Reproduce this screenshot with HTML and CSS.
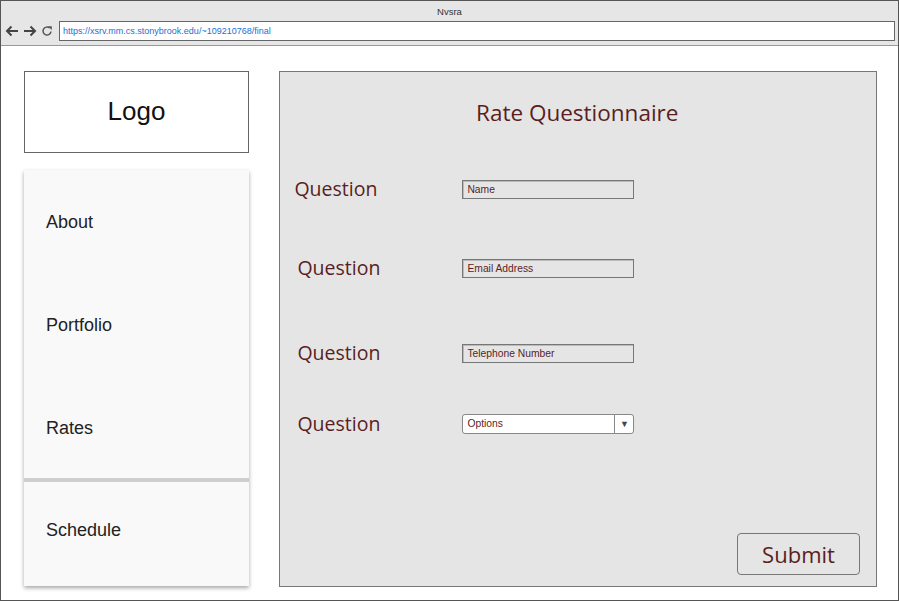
FILE: index.html
```html
<!DOCTYPE html>
<html>
<head>
<meta charset="utf-8">
<title>Nvsra</title>
<link rel="stylesheet" href="styles.css">
</head>
<body>
<div class="frame">
  <div class="chrome">
    <div class="win-title">Nvsra</div>
    <div class="navbar">
      <div class="nav-icons">
        <svg width="14" height="12" viewBox="0 0 14 12"><path d="M13 6H2M6.5 1.5L2 6l4.5 4.5" fill="none" stroke="#444" stroke-width="2"/></svg>
        <svg width="14" height="12" viewBox="0 0 14 12"><path d="M1 6h11M7.5 1.5L12 6l-4.5 4.5" fill="none" stroke="#444" stroke-width="2"/></svg>
        <svg width="12" height="12" viewBox="0 0 12 12"><path d="M10 6.5A4 4 0 1 1 8.6 3" fill="none" stroke="#555" stroke-width="1.5"/><path d="M7 1.2h3.8v3.8z" fill="#555"/></svg>
      </div>
      <div class="url">https://xsrv.mm.cs.stonybrook.edu/~109210768/final</div>
    </div>
  </div>
  <div class="content">
    <div class="side">
      <div class="logo">Logo</div>
      <div class="menu">
        <div class="item">About</div>
        <div class="item">Portfolio</div>
        <div class="item">Rates</div>
        <div class="sep"></div>
        <div class="item last">Schedule</div>
      </div>
    </div>
    <div class="panel">
      <div class="title">Rate Questionnaire</div>
      <div class="row q1">
        <div class="label">Question</div>
        <div class="field">Name</div>
      </div>
      <div class="row q2">
        <div class="label indent">Question</div>
        <div class="field">Email Address</div>
      </div>
      <div class="row q3">
        <div class="label indent">Question</div>
        <div class="field">Telephone Number</div>
      </div>
      <div class="row q4">
        <div class="label indent">Question</div>
        <div class="select"><span class="opt">Options</span><span class="arrow">▼</span></div>
      </div>
      <div class="actions">
        <div class="submit">Submit</div>
      </div>
    </div>
  </div>
</div>
</body>
</html>
```
FILE: styles.css
```css
html, body {
  margin: 0;
  padding: 0;
  background: #fff;
}
.frame {
  width: 899px;
  height: 601px;
  box-sizing: border-box;
  border: 1px solid #555;
  display: flex;
  flex-direction: column;
  font-family: "Liberation Sans", Arial, sans-serif;
}
.chrome {
  flex-shrink: 0;
  height: 45px;
  background: #e6e6e6;
  border-bottom: 1px solid #999;
  box-sizing: border-box;
  display: flex;
  flex-direction: column;
}
.win-title {
  height: 20px;
  line-height: 22px;
  text-align: center;
  font-size: 9.5px;
  color: #333;
}
.navbar {
  display: flex;
  align-items: center;
  height: 20px;
}
.nav-icons {
  width: 58px;
  display: flex;
  align-items: center;
  gap: 4px;
  padding-left: 4px;
  box-sizing: border-box;
}
.url {
  flex: 1;
  margin-right: 3px;
  height: 20px;
  box-sizing: border-box;
  border: 1px solid #666;
  background: #fff;
  font-size: 9px;
  line-height: 18px;
  color: #1a6fd6;
  padding-left: 3px;
}
.content {
  flex: 1;
  min-height: 0;
  display: flex;
  align-items: flex-start;
  padding: 25px 21px 12px 23px;
}
.side {
  width: 226px;
  display: flex;
  flex-direction: column;
}
.logo {
  width: 225px;
  height: 82px;
  box-sizing: border-box;
  border: 1px solid #666;
  display: flex;
  align-items: center;
  justify-content: center;
  padding-bottom: 2px;
  font-size: 26px;
  color: #111;
}
.menu {
  margin-top: 17px;
  width: 225px;
  height: 416px;
  background: #f9f9f9;
  box-shadow: 0 2px 4px rgba(0,0,0,0.35);
  display: flex;
  flex-direction: column;
}
.item {
  height: 103px;
  box-sizing: border-box;
  display: flex;
  align-items: center;
  padding-left: 22px;
  padding-top: 2px;
  font-size: 18px;
  color: #222;
}
.item.last {
  flex: 1;
  padding-bottom: 10px;
}
.sep {
  height: 4px;
  background: #cfcfcf;
  margin-top: -1px;
}
.panel {
  margin-left: 30px;
  width: 599px;
  height: 516px;
  box-sizing: border-box;
  border: 1px solid #777;
  background: #e5e5e5;
  display: flex;
  flex-direction: column;
  padding: 26px 16px 11px 14px;
  font-family: "Open Sans", sans-serif;
  color: #5a1e1e;
}
.title {
  text-align: center;
  font-size: 22.5px;
  line-height: 30px;
}
.row {
  display: flex;
  align-items: center;
  height: 20px;
}
.q1 { margin-top: 51px; }
.q2 { margin-top: 59px; }
.q3 { margin-top: 65px; }
.q4 { margin-top: 51px; }
.label {
  width: 168px;
  box-sizing: border-box;
  font-size: 19.5px;
  line-height: 20px;
}
.label.indent {
  padding-left: 3px;
}
.field {
  width: 172px;
  height: 19px;
  box-sizing: border-box;
  border: 1px solid #777;
  box-shadow: inset 1px 1px 0 #bbb;
  background: #e5e5e5;
  font-family: "Liberation Sans", Arial, sans-serif;
  font-size: 10.3px;
  line-height: 17px;
  padding-left: 4px;
  color: #5a1e1e;
}
.select {
  width: 172px;
  height: 20px;
  box-sizing: border-box;
  border: 1px solid #888;
  border-radius: 3px;
  background: #fff;
  display: flex;
  font-family: "Liberation Sans", Arial, sans-serif;
  font-size: 10.3px;
  color: #5a1e1e;
}
.opt {
  flex: 1;
  line-height: 18px;
  padding-left: 4px;
}
.arrow {
  width: 18px;
  border-left: 1px solid #888;
  text-align: center;
  font-size: 9px;
  line-height: 18px;
  color: #444;
}
.actions {
  margin-top: auto;
  display: flex;
  justify-content: flex-end;
}
.submit {
  width: 123px;
  height: 42px;
  box-sizing: border-box;
  border: 1px solid #777;
  border-radius: 4px;
  display: flex;
  align-items: center;
  justify-content: center;
  font-size: 22px;
  color: #5a1e1e;
}
```
